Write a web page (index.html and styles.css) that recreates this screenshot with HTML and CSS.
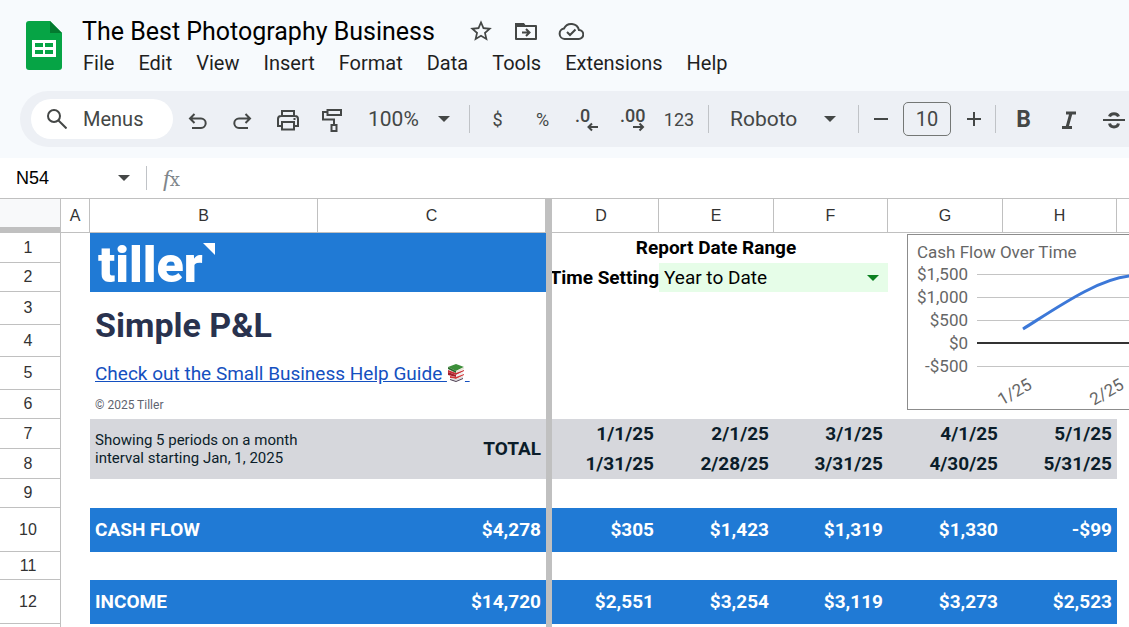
FILE: index.html
```html
<!DOCTYPE html>
<html lang="en">
<head>
  <meta charset="UTF-8" />
  <meta name="viewport" content="width=device-width, initial-scale=1.0"/>
  <title>The Best Photography Business</title>
  <link rel="stylesheet" href="styles.css">
</head>
<body>

<header class="top">
  <div class="titlebar">
    <svg class="logo" viewBox="0 0 36 49" width="36" height="49">
      <path fill="#06a445" d="M3 0h21l12 12v34a3 3 0 0 1-3 3H3a3 3 0 0 1-3-3V3a3 3 0 0 1 3-3z"/>
      <path fill="#047a2f" d="M24 0l12 12H24z"/>
      <path fill="#fff" fill-rule="evenodd" d="M6 19h24v17H6zM9 22v4h8v-4zM19 22v4h8v-4zM9 29v4h8v-4zM19 29v4h8v-4z"/>
    </svg>
    <div class="heading">
      <div class="title-row">
        <h1>The Best Photography Business</h1>
        <button class="title-icon" aria-label="Star">
          <svg viewBox="0 0 24 24" width="26" height="26"><path fill="#444746" d="M22 9.240l-7.190-.620L12 2 9.190 8.630 2 9.240l5.460 4.730L5.820 21 12 17.270 18.180 21l-1.630-7.030L22 9.240zM12 15.400l-3.760 2.270 1-4.280-3.320-2.880 4.380-.380L12 6.100l1.710 4.040 4.380.380-3.320 2.880 1 4.280L12 15.400z"/></svg>
        </button>
        <button class="title-icon" aria-label="Move">
          <svg viewBox="0 0 26 26" width="26" height="26"><path fill="none" stroke="#444746" stroke-width="2" stroke-linejoin="round" d="M3 6h7l2 2h11v13H3z"/><path fill="#444746" d="M2 5h9l2 4H2z"/><path fill="none" stroke="#444746" stroke-width="2" d="M9 14.500h7M13 11l3.500 3.500-3.500 3.500"/></svg>
        </button>
        <button class="title-icon" aria-label="Saved to Drive">
          <svg viewBox="0 0 26 26" width="26" height="26"><path fill="none" stroke="#444746" stroke-width="2" d="M6.500 21h14a4.500 4.500 0 0 0 .5-9 8 8 0 0 0-15-1.500A5.300 5.300 0 0 0 6.500 21z"/><path fill="none" stroke="#444746" stroke-width="2" d="M9 14l3 3 5.500-5.500"/></svg>
        </button>
      </div>
      <nav class="menus">
        <button>File</button>
        <button>Edit</button>
        <button>View</button>
        <button>Insert</button>
        <button>Format</button>
        <button>Data</button>
        <button>Tools</button>
        <button>Extensions</button>
        <button>Help</button>
      </nav>
    </div>
  </div>

  <div class="toolbar">
    <label class="search">
      <svg viewBox="0 0 20 20" width="20" height="20"><g fill="none" stroke="#444746" stroke-width="2"><circle cx="7" cy="7" r="6"/><path d="M11.500 11.500l8 8"/></g></svg>
      <input type="text" placeholder="Menus" aria-label="Menus">
    </label>
    <button class="tool" aria-label="Undo">
      <svg viewBox="0 0 24 24" width="24" height="24"><path d="M8.500 7l-4.500 4.500L8.500 16M4.500 11.500H15a4.700 4.700 0 0 1 0 9.400H6"/></svg>
    </button>
    <button class="tool" aria-label="Redo">
      <svg viewBox="0 0 24 24" width="24" height="24"><path d="M14.500 7l4.500 4.500-4.500 4.500M18.500 11.500H8a4.700 4.700 0 0 0 0 9.400h9"/></svg>
    </button>
    <button class="tool" aria-label="Print">
      <svg viewBox="0 0 24 24" width="24" height="24"><path d="M6 9V4h12v5M6 19H2v-7a3 3 0 0 1 3-3h14a3 3 0 0 1 3 3v7h-4M6 15h12v7.500H6zM17.500 12h2"/></svg>
    </button>
    <button class="tool" aria-label="Paint format">
      <svg viewBox="0 0 24 28" width="24" height="28"><path d="M6.500 5H20v5H6.500zM6.500 7H2v7.500h11V20M10.500 20h5v6h-5z"/></svg>
    </button>
    <span class="picker zoom">
      <select aria-label="Zoom"><option>100%</option></select>
      <i class="arrow"></i>
    </span>
    <span class="sep"></span>
    <button class="tool small">$</button>
    <button class="tool small">%</button>
    <button class="tool" aria-label="Decrease decimal places">
      <svg viewBox="0 0 28 32" width="28" height="32"><text x="1" y="19">.0</text><path d="M24 24H14.500M18 20.500L14.500 24l3.500 3.500"/></svg>
    </button>
    <button class="tool" aria-label="Increase decimal places">
      <svg viewBox="0 0 28 32" width="28" height="32"><text x="1" y="19">.00</text><path d="M14 24h10M20.500 20.500L24 24l-3.500 3.500"/></svg>
    </button>
    <button class="tool small wide">123</button>
    <span class="sep"></span>
    <span class="picker font">
      <select aria-label="Font"><option>Roboto</option></select>
      <i class="arrow"></i>
    </span>
    <span class="sep"></span>
    <button class="tool step" aria-label="Decrease font size">
      <svg viewBox="0 0 16 16" width="16" height="16"><path d="M1 8h14"/></svg>
    </button>
    <input class="size" type="text" value="10" aria-label="Font size">
    <button class="tool step" aria-label="Increase font size">
      <svg viewBox="0 0 16 16" width="16" height="16"><path d="M1 8h14M8 1v14"/></svg>
    </button>
    <span class="sep"></span>
    <button class="tool bold">B</button>
    <button class="tool" aria-label="Italic">
      <svg viewBox="0 0 24 24" width="24" height="24"><path class="thick" d="M9 6h10M5 20.500h10M14 6L10 20.500"/></svg>
    </button>
    <button class="tool" aria-label="Strikethrough">
      <svg viewBox="0 0 24 24" width="24" height="24"><path d="M1 13h22"/><path class="thick" d="M16.500 9.500a4.600 3.500 0 0 0-9 0M7.500 16.500a4.600 4.300 0 0 0 9 0"/></svg>
    </button>
  </div>
</header>

<div class="formula-bar">
  <input class="name-box" type="text" value="N54" aria-label="Name box">
  <i class="arrow"></i>
  <span class="sep"></span>
  <span class="fx"><i>f</i>x</span>
</div>

<main class="sheet">
  <table>
    <colgroup>
      <col class="c-num"><col class="c-a"><col class="c-wide"><col class="c-wide"><col class="c-freeze">
      <col class="c-d"><col class="c-odd"><col class="c-even"><col class="c-odd"><col class="c-even"><col class="c-odd">
    </colgroup>
    <thead>
      <tr>
        <th class="corner"></th><th>A</th><th>B</th><th>C</th><th class="freeze"></th>
        <th class="under-freeze">D</th><th>E</th><th>F</th><th>G</th><th>H</th><th></th>
      </tr>
    </thead>
    <tbody>
      <tr class="h30">
        <th>1</th><td></td>
        <td class="brand" colspan="2" rowspan="2">
          <div class="tiller">tiller<svg viewBox="0 0 12 12" width="12" height="12"><path fill="#fff" d="M0 0h12v12z"/></svg></div>
        </td>
        <td class="freeze"></td>
        <td class="range under-freeze" colspan="3">Report Date Range</td>
        <td></td><td></td><td></td>
      </tr>
      <tr class="h29">
        <th>2</th><td></td><td class="freeze"></td>
        <td class="setting"><label for="period">Time Setting</label></td>
        <td class="period" colspan="2">
          <span class="picker">
            <select id="period"><option>Year to Date</option></select>
            <i class="arrow"></i>
          </span>
        </td>
        <td></td><td></td><td></td>
      </tr>
      <tr class="h33">
        <th>3</th><td></td>
        <td class="name" colspan="2" rowspan="2">Simple P&amp;L</td>
        <td class="freeze"></td><td></td><td></td><td></td><td></td><td></td><td></td>
      </tr>
      <tr class="h32">
        <th>4</th><td></td><td class="freeze"></td><td></td><td></td><td></td><td></td><td></td><td></td>
      </tr>
      <tr class="h33">
        <th>5</th><td></td>
        <td class="guide" colspan="2"><a href="#">Check out the Small Business Help Guide <svg viewBox="0 0 18 18" width="18" height="18">
          <path fill="#3c8f3a" d="M1 3l8-3 8 3-8 4z"/><path fill="#2b6a2b" d="M1 3l8 4v2L1 5z"/><path fill="#e9e4d8" d="M9 7l8-4v2L9 9z"/>
          <path fill="#c62f35" d="M1 6l8 3 8-3v1L9 11 1 8z"/><path fill="#eee" d="M9 11l7-3v2l-7 3z"/><path fill="#a31f2a" d="M1 8l8 3v2l-8-2z"/>
          <path fill="#d23b3b" d="M3 12l6 1 8-3v1l-8 4-6-1z"/><path fill="#ddd" d="M4 14l5 1 7-3v2l-7 3-5-1z"/><path fill="#4b3c50" d="M3 15l6 2 7-3v1l-7 3-6-2z"/>
        </svg>&nbsp;</a></td>
        <td class="freeze"></td><td></td><td></td><td></td><td></td><td></td><td></td>
      </tr>
      <tr class="h29">
        <th>6</th><td></td>
        <td class="copyright" colspan="2">© 2025 Tiller</td>
        <td class="freeze"></td><td></td><td></td><td></td><td></td><td></td><td></td>
      </tr>
      <tr class="h30 dates">
        <th>7</th><td></td>
        <td class="note" rowspan="2">Showing 5 periods on a month interval starting Jan, 1, 2025</td>
        <td rowspan="2">TOTAL</td>
        <td class="freeze"></td>
        <td>1/1/25</td><td>2/1/25</td><td>3/1/25</td><td>4/1/25</td><td>5/1/25</td><td></td>
      </tr>
      <tr class="h30 dates">
        <th>8</th><td></td><td class="freeze"></td>
        <td>1/31/25</td><td>2/28/25</td><td>3/31/25</td><td>4/30/25</td><td>5/31/25</td><td></td>
      </tr>
      <tr class="h29">
        <th>9</th><td></td><td></td><td></td><td class="freeze"></td><td></td><td></td><td></td><td></td><td></td><td></td>
      </tr>
      <tr class="h44 total">
        <th>10</th><td></td><td class="left">CASH FLOW</td><td>$4,278</td><td class="freeze"></td>
        <td>$305</td><td>$1,423</td><td>$1,319</td><td>$1,330</td><td>-$99</td><td></td>
      </tr>
      <tr class="h28">
        <th>11</th><td></td><td></td><td></td><td class="freeze"></td><td></td><td></td><td></td><td></td><td></td><td></td>
      </tr>
      <tr class="h44 total">
        <th>12</th><td></td><td class="left">INCOME</td><td>$14,720</td><td class="freeze"></td>
        <td>$2,551</td><td>$3,254</td><td>$3,119</td><td>$3,273</td><td>$2,523</td><td></td>
      </tr>
      <tr class="h29">
        <th></th><td></td><td></td><td></td><td class="freeze"></td><td></td><td></td><td></td><td></td><td></td><td></td>
      </tr>
    </tbody>
  </table>

  <!-- floating chart, sits over columns G onwards -->
  <figure class="chart">
    <svg viewBox="0 0 400 174" width="400" height="174">
      <text x="9" y="23">Cash Flow Over Time</text>
      <g class="grid"><path d="M69 39.500h331M69 62.500h331M69 85.500h331M69 131.500h331"/></g>
      <path class="zero" d="M69 108h331"/>
      <g text-anchor="end">
        <text x="60" y="45">$1,500</text>
        <text x="60" y="68">$1,000</text>
        <text x="60" y="91">$500</text>
        <text x="60" y="114">$0</text>
        <text x="60" y="137">-$500</text>
      </g>
      <g text-anchor="end">
        <text transform="translate(125 153) rotate(-30)">1/25</text>
        <text transform="translate(217 153) rotate(-30)">2/25</text>
      </g>
      <path class="line" d="M115 94C150 72 190 44 222 41S270 45 300 45"/>
    </svg>
  </figure>
</main>

</body>
</html>
```
FILE: styles.css
```css
* {
  box-sizing: border-box;
}

body {
  margin: 0;
  height: 100vh;
  display: flex;
  flex-direction: column;
  overflow: hidden;
  background: #fff;
  font-family: Roboto, "Liberation Sans", sans-serif;
}

button, input, select {
  font: inherit;
  color: inherit;
  border: none;
  background: none;
  padding: 0;
  outline: none;
}

select {
  appearance: none;
}

svg {
  flex: none;
}

/* header */
.top {
  background: #f7fafd;
  padding: 15px 0 11px;
}

.titlebar {
  display: flex;
  align-items: flex-start;
  gap: 20px;
  padding: 0 26px;
}

.logo {
  margin-top: 6px;
}

.title-row {
  display: flex;
  align-items: center;
  height: 32px;
  gap: 19px;
}

.title-row h1 {
  margin: 0 14px 0 0;
  font-size: 25px;
  font-weight: 400;
  white-space: nowrap;
}

.title-icon {
  width: 26px;
  height: 26px;
}

.menus {
  display: flex;
  gap: 24px;
  height: 32px;
  padding-left: 1px;
  font-size: 20px;
  color: #1f1f1f;
}

.toolbar {
  display: flex;
  align-items: center;
  height: 56px;
  margin: 12px 0 0 20px;
  padding-left: 11px;
  border-radius: 28px 0 0 28px;
  background: #edf0f5;
  color: #444746;
  font-size: 20px;
  overflow: hidden;
}

.search {
  display: flex;
  align-items: center;
  flex: none;
  gap: 16px;
  width: 142px;
  height: 40px;
  margin-right: 2px;
  padding-left: 16px;
  border-radius: 20px;
  background: #fff;
}

.search input {
  width: 80px;
}

.search input::placeholder {
  color: #444746;
  opacity: 1;
}

.tool {
  display: flex;
  align-items: center;
  justify-content: center;
  flex: none;
  width: 45px;
  height: 40px;
}

.tool path {
  fill: none;
  stroke: #444746;
  stroke-width: 2;
}

.tool .thick {
  stroke-width: 3;
}

.tool text {
  font-size: 18px;
  font-weight: 500;
  fill: #444746;
}

.tool.small {
  font-size: 18px;
}

.tool.wide {
  width: 48px;
}

.tool.step {
  width: 33px;
}

.tool.bold {
  font-size: 23px;
  font-weight: 700;
}

.sep {
  flex: none;
  width: 1px;
  height: 28px;
  margin: 0 5px;
  background: #c0c3c7;
}

.arrow {
  flex: none;
  border: 6px solid transparent;
  border-top-color: currentColor;
  border-bottom: none;
  pointer-events: none;
}

.picker {
  display: flex;
  align-items: center;
  justify-content: space-between;
  flex: none;
}

.picker select {
  flex: 1;
}

.zoom {
  width: 109px;
  padding: 0 14px 0 13px;
  font-size: 21px;
}

.font {
  width: 139px;
  padding: 0 17px 0 16px;
  font-size: 21px;
}

.size {
  width: 48px;
  height: 34px;
  margin: 0 6px;
  border: 1px solid #747775;
  border-radius: 5px;
  text-align: center;
}

/* formula bar */
.formula-bar {
  display: flex;
  align-items: center;
  height: 40px;
  padding-left: 16px;
  color: #444746;
}

.name-box {
  width: 102px;
  font-family: "Liberation Sans", Arial, sans-serif;
  font-size: 18px;
  color: #000;
}

.formula-bar .sep {
  height: 24px;
  margin: 0 16px;
}

.fx {
  font-family: "DejaVu Serif", serif;
  font-size: 18px;
  color: #80868b;
}

.fx i {
  font-family: "Liberation Serif", serif;
  font-size: 24px;
}

/* sheet */
.sheet {
  position: relative;
  flex: 1;
  overflow: hidden;
}

table {
  table-layout: fixed;
  width: 1232px;
  border-collapse: separate;
  border-spacing: 0;
  font-size: 19px;
}

.c-num { width: 61px; }
.c-a { width: 29px; }
.c-wide { width: 228px; }
.c-freeze { width: 6px; }
.c-d { width: 107px; }
.c-odd { width: 115px; }
.c-even { width: 114px; }

th, td {
  padding: 0;
  line-height: 20px;
  white-space: nowrap;
}

th {
  border: 0 solid #c0c0c0;
  border-width: 0 1px 1px 0;
  font-family: "Liberation Sans", Arial, sans-serif;
  font-size: 16px;
  font-weight: 400;
  color: #333;
}

thead th {
  height: 35px;
  border-top-width: 1px;
}

tbody th {
  padding-right: 4px;
}

.corner {
  background: #f8f9fa;
  border-bottom: 6px solid #c0c0c0;
}

.freeze {
  background: #c0c0c0;
}

.under-freeze {
  padding-right: 8px;
}

.h28 { height: 28px; }
.h29 { height: 29px; }
.h30 { height: 30px; }
.h32 { height: 32px; }
.h33 { height: 33px; }
.h44 { height: 44px; }

.brand {
  background: #207ad5;
}

.tiller {
  display: flex;
  height: 58px;
  padding: 9px 0 0 8px;
  font-size: 50px;
  font-weight: 900;
  line-height: 44px;
  color: #fff;
}

.range {
  text-align: center;
  font-weight: 700;
}

.setting {
  font-weight: 700;
}

.setting label {
  display: flex;
  justify-content: flex-end;
  overflow: hidden;
}

.period {
  background: #e6fde8;
}

.period .picker {
  padding: 0 9px 0 5px;
}

.period .arrow {
  color: #0b8020;
}

.name {
  padding-left: 5px;
  font-size: 34px;
  font-weight: 700;
  color: #29324e;
}

.guide {
  padding-left: 5px;
}

.guide a {
  color: #1450c0;
}

.guide svg {
  vertical-align: -2px;
}

.copyright {
  padding-left: 5px;
  font-size: 12px;
  color: #5f6470;
}

.dates td,
.total td {
  padding-right: 5px;
  text-align: right;
  font-weight: 700;
}

.dates td {
  background: #d6d7dc;
  color: #0b1d2a;
}

.dates .note {
  padding-left: 5px;
  text-align: left;
  font-size: 15px;
  font-weight: 400;
  line-height: 18px;
  white-space: normal;
}

.total td {
  background: #207ad5;
  color: #fff;
}

.total .left {
  padding-left: 5px;
  text-align: left;
}

.dates th + td,
.dates td:last-child,
.total th + td,
.total td:last-child {
  background: none;
}

.dates .freeze,
.total .freeze {
  padding: 0;
  background: #c0c0c0;
}

/* chart */
.chart {
  position: absolute;
  top: 36px;
  left: 907px;
  margin: 0;
  border: 1px solid #8c8c8c;
  background: #fff;
}

.chart svg {
  display: block;
}

.chart text {
  font-size: 17px;
  fill: #666;
}

.grid {
  stroke: #c4c4c4;
}

.zero {
  stroke: #333;
  stroke-width: 2;
}

.line {
  fill: none;
  stroke: #3c78d8;
  stroke-width: 3;
}
```
